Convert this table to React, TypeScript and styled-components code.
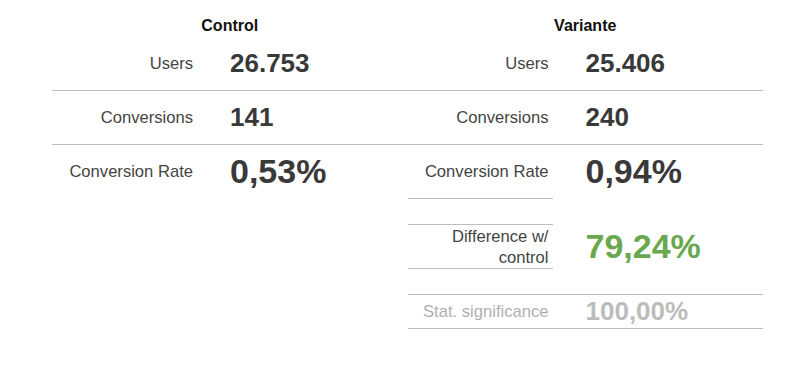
import React from "react";
import styled, { createGlobalStyle } from "styled-components";

const GlobalStyle = createGlobalStyle`
    body {
        margin: 0;
        background: #ffffff;
        font-family: "Liberation Sans", Arial, sans-serif;
    }
`

const Page = styled.main`
    width: 800px;
    height: 377px;
    padding: 0 37px 0 52px;
    box-sizing: border-box;
    display: flex;
    align-items: flex-start;
`

const Column = styled.section`
    flex: 1;
    display: flex;
    flex-direction: column;
`

const Header = styled.h2`
    margin: 0;
    height: 37px;
    padding-top: 17px;
    box-sizing: border-box;
    text-align: center;
    font-size: 16px;
    line-height: 18px;
    font-weight: bold;
    color: #111;
`

const Row = styled.div<{ $rule?: boolean; $top?: boolean; $height: number }>`
    display: grid;
    grid-template-columns: 145px 1fr;
    height: ${({ $height }) => $height}px;
    border-bottom: ${({ $rule }) => ($rule ? "1px solid #bdbdbd" : "none")};
    border-top: ${({ $top }) => ($top ? "1px solid #bdbdbd" : "none")};
`

const Label = styled.div<{ $muted?: boolean; $ruled?: boolean }>`
    display: flex;
    align-items: center;
    justify-content: flex-end;
    text-align: right;
    padding-right: 4px;
    font-size: 16.6px;
    line-height: 21px;
    color: ${({ $muted }) => ($muted ? "#b0b0b0" : "#444")};
    border-top: ${({ $ruled }) => ($ruled ? "1px solid #bdbdbd" : "none")};
    border-bottom: ${({ $ruled }) => ($ruled ? "1px solid #bdbdbd" : "none")};
`

const Value = styled.div<{ $big?: boolean; $tone?: "green" | "muted" }>`
    display: flex;
    align-items: center;
    padding-left: 33px;
    font-weight: bold;
    font-size: ${({ $big }) => ($big ? "34px" : "26px")};
    color: ${({ $tone }) =>
        $tone === "green" ? "#6aa84f" : $tone === "muted" ? "#bcbcbc" : "#393939"};
`

const Spacer = styled.div<{ $height: number }>`
    height: ${({ $height }) => $height}px;
`

const LabelRule = styled.div`
    width: 145px;
    border-top: 1px solid #bdbdbd;
`

export default function App() {
    return (
        <>
            <GlobalStyle />
            <Page>
                <Column>
                    <Header>Control</Header>
                    <Row $rule $height={53}>
                        <Label>Users</Label>
                        <Value>26.753</Value>
                    </Row>
                    <Row $rule $height={53}>
                        <Label>Conversions</Label>
                        <Value>141</Value>
                    </Row>
                    <Row $height={53}>
                        <Label>Conversion Rate</Label>
                        <Value $big>0,53%</Value>
                    </Row>
                </Column>
                <Column>
                    <Header>Variante</Header>
                    <Row $rule $height={53}>
                        <Label>Users</Label>
                        <Value>25.406</Value>
                    </Row>
                    <Row $rule $height={53}>
                        <Label>Conversions</Label>
                        <Value>240</Value>
                    </Row>
                    <Row $height={53}>
                        <Label>Conversion Rate</Label>
                        <Value $big>0,94%</Value>
                    </Row>
                    <LabelRule />
                    <Spacer $height={25} />
                    <Row $height={45}>
                        <Label $ruled>Difference w/<br />control</Label>
                        <Value $big $tone="green">79,24%</Value>
                    </Row>
                    <Spacer $height={25} />
                    <Row $top $rule $height={33}>
                        <Label $muted>Stat. significance</Label>
                        <Value $tone="muted">100,00%</Value>
                    </Row>
                </Column>
            </Page>
        </>
    )
}
